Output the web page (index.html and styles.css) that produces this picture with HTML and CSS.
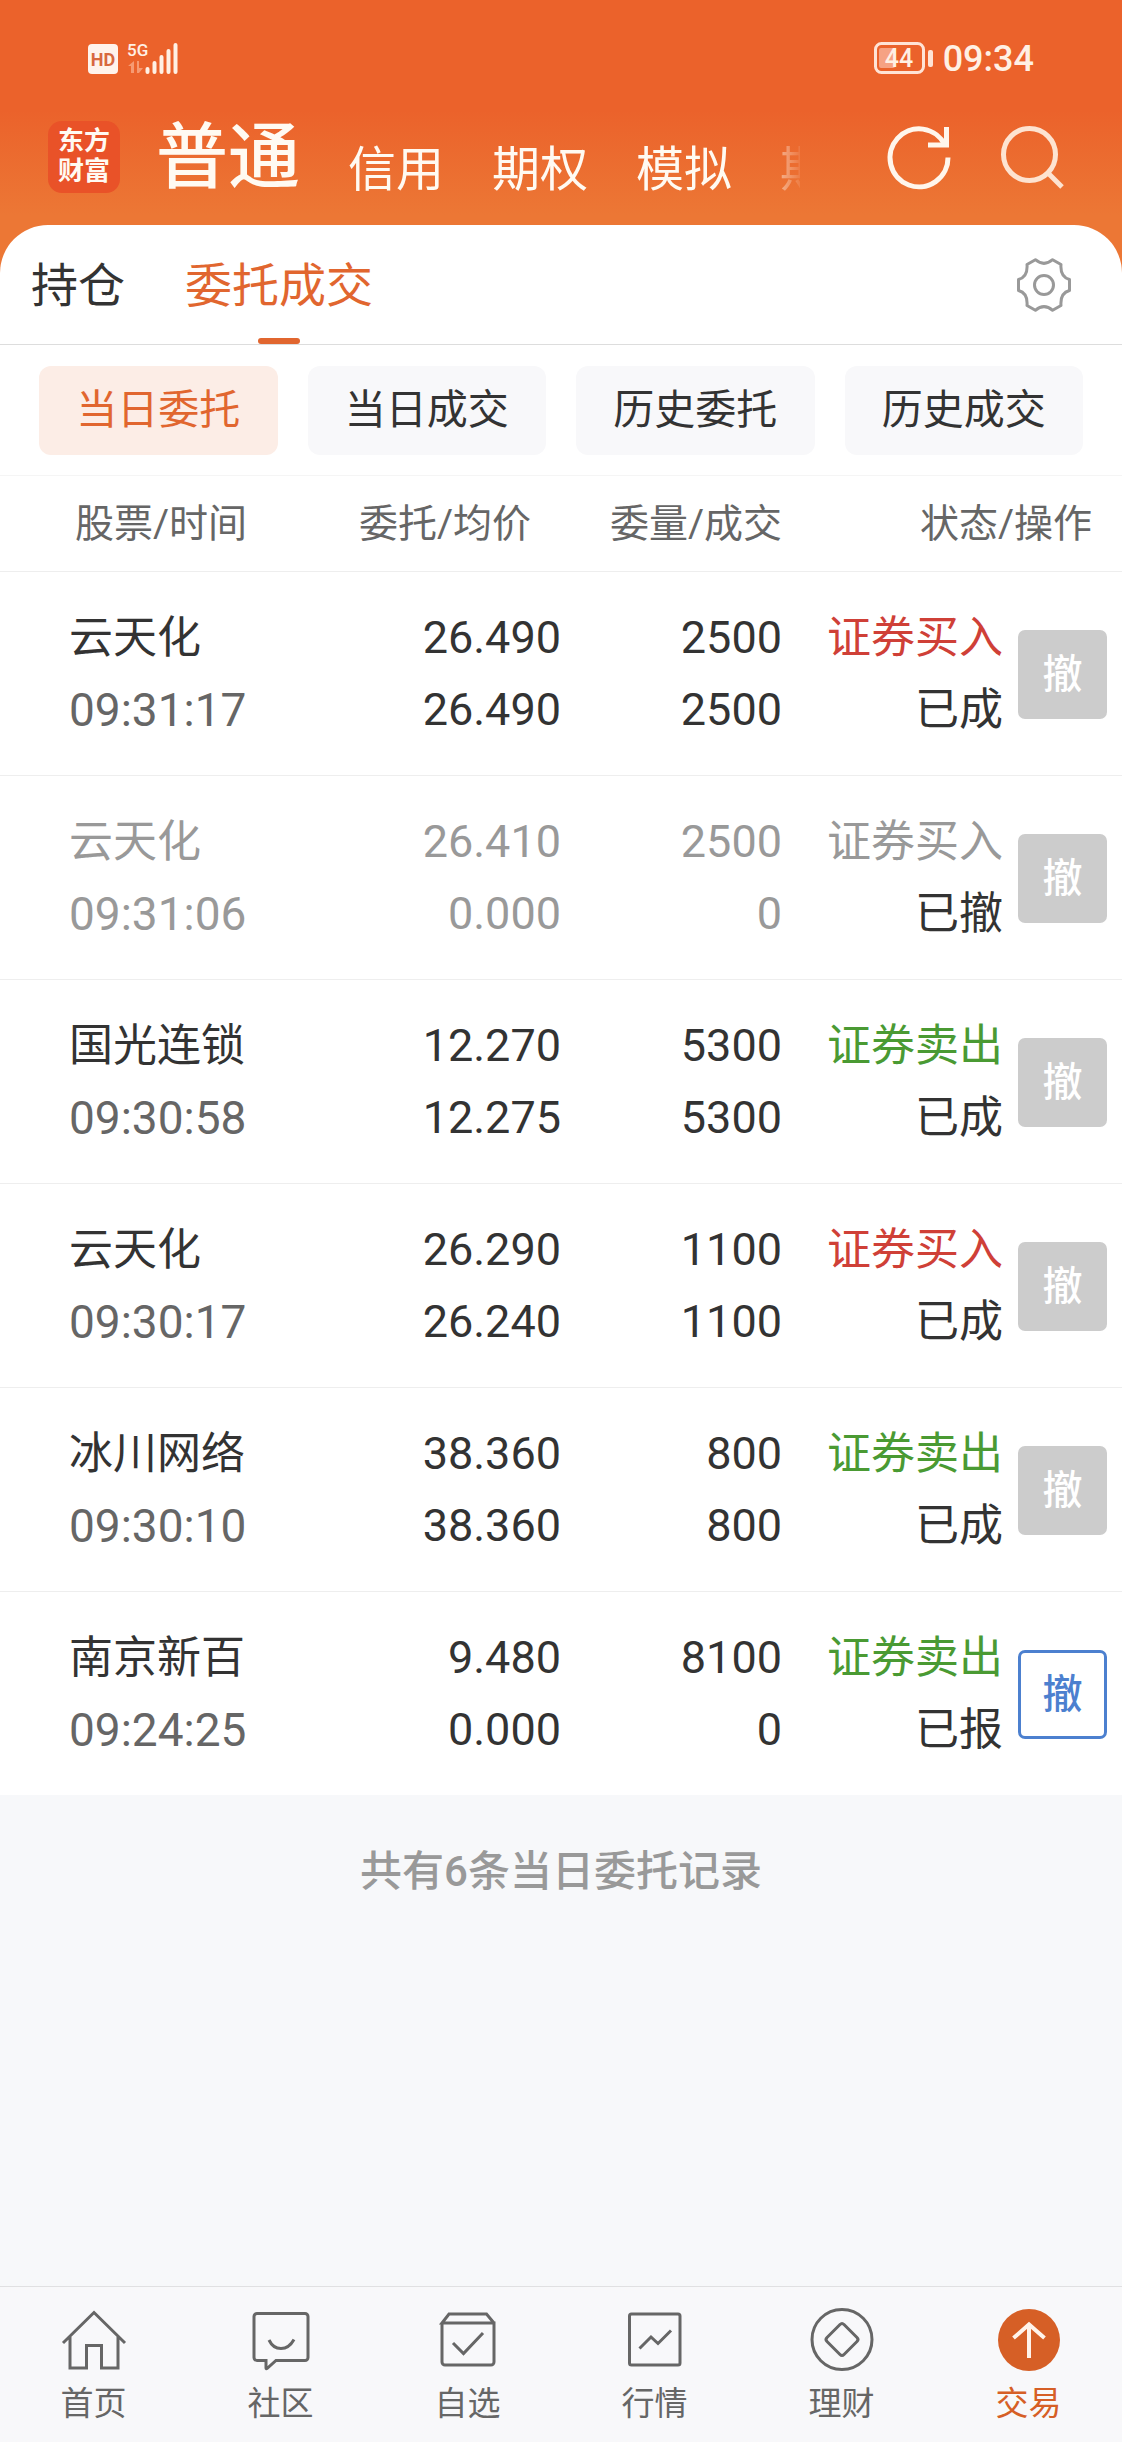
FILE: index.html
```html
<!DOCTYPE html>
<html lang="zh-CN">
<head>
<meta charset="utf-8">
<meta name="viewport" content="width=device-width, initial-scale=1">
<title>委托成交</title>
<link rel="stylesheet" href="styles.css">
</head>
<body>
<div class="app">
  <header class="top">
    <div class="status-bar">
      <svg class="signal" width="92" height="34" viewBox="0 0 92 34" aria-hidden="true">
        <rect x="0" y="3" width="30" height="30" rx="4" fill="#fff3ec"/>
        <text x="15" y="25" text-anchor="middle" font-size="18" font-weight="700" fill="#d8683f">HD</text>
        <text x="39" y="15" font-size="17" font-weight="500" fill="#fff0e4">5G</text>
        <path d="M46 20v12h-3v-7h-3zM49 20h2v7h4l-4 5h-2z" fill="#f69a72"/>
        <path d="M59.500 28v3M66.500 22v9M73.500 16v15M80.500 10v21M87.500 4v27" stroke="#fff0e4" stroke-width="4" stroke-linecap="round"/>
      </svg>
      <div class="status-right">
        <svg width="62" height="34" viewBox="0 0 62 34" aria-hidden="true">
          <rect x="2.500" y="2.500" width="48" height="29" rx="6" fill="none" stroke="#ffe3d5" stroke-width="3"/>
          <rect x="6" y="7" width="16" height="20" rx="2" fill="#f6a283"/>
          <rect x="55" y="9" width="5" height="17" rx="2" fill="#ffe3d5"/>
          <text x="26" y="26" text-anchor="middle" font-size="25" font-weight="500" fill="#fff0e4">44</text>
        </svg>
        <span class="clock">09:34</span>
      </div>
    </div>
    <div class="title-bar">
      <div class="brand"><span>东方</span><span>财富</span></div>
      <nav class="accounts">
        <a class="current" href="#">普通</a>
        <a href="#">信用</a>
        <a href="#">期权</a>
        <a href="#">模拟</a>
        <a href="#">期货</a>
      </nav>
      <div class="tools">
        <button type="button" aria-label="刷新">
          <svg width="72" height="72" viewBox="0 0 72 72" fill="none" stroke="#fff6ec" stroke-width="5">
            <path d="M65 36.500A29 29 0 1 1 62 24"/>
            <path d="M63.500 6v18H45"/>
          </svg>
        </button>
        <button type="button" aria-label="搜索">
          <svg width="72" height="72" viewBox="0 0 72 72" fill="none" stroke="#fde3d1" stroke-width="5">
            <circle cx="35.500" cy="33.500" r="26"/>
            <path d="M54 52l14 14"/>
          </svg>
        </button>
      </div>
    </div>
  </header>

  <main class="sheet">
    <div class="tabs">
      <a href="#">持仓</a>
      <a class="current" href="#">委托成交</a>
      <button class="settings" type="button" aria-label="设置">
        <svg width="54" height="54" viewBox="-27 -27 54 54" fill="none" stroke="#999" stroke-width="3" stroke-linejoin="round">
          <path d="M-8.600 -25.300Q0 -18 8.600 -25.300L17 -20.500Q16 -8 25.500 -5.500V5.500Q16 8 17 20.500L8.600 25.300Q0 18 -8.600 25.300L-17 20.500Q-16 8 -25.500 5.500V-5.500Q-16 -8 -17 -20.500Z"/>
          <circle r="9.500"/>
        </svg>
      </button>
    </div>

    <div class="filters">
      <button class="current" type="button">当日委托</button>
      <button type="button">当日成交</button>
      <button type="button">历史委托</button>
      <button type="button">历史成交</button>
    </div>

    <table class="orders">
      <colgroup>
        <col>
        <col class="col-price">
        <col class="col-qty">
        <col class="col-state">
        <col class="col-action">
      </colgroup>
      <thead>
        <tr>
          <th class="name">股票/时间</th>
          <th class="price">委托/均价</th>
          <th>委量/成交</th>
          <th class="state" colspan="2">状态/操作</th>
        </tr>
      </thead>
      <tbody>
        <tr>
          <td class="name"><span>云天化</span><time>09:31:17</time></td>
          <td><span>26.490</span><span>26.490</span></td>
          <td><span>2500</span><span>2500</span></td>
          <td><span class="buy">证券买入</span><span>已成</span></td>
          <td class="action"><button type="button" disabled>撤</button></td>
        </tr>
        <tr class="cancelled">
          <td class="name"><span>云天化</span><time>09:31:06</time></td>
          <td><span>26.410</span><span>0.000</span></td>
          <td><span>2500</span><span>0</span></td>
          <td><span>证券买入</span><span class="result">已撤</span></td>
          <td class="action"><button type="button" disabled>撤</button></td>
        </tr>
        <tr>
          <td class="name"><span>国光连锁</span><time>09:30:58</time></td>
          <td><span>12.270</span><span>12.275</span></td>
          <td><span>5300</span><span>5300</span></td>
          <td><span class="sell">证券卖出</span><span>已成</span></td>
          <td class="action"><button type="button" disabled>撤</button></td>
        </tr>
        <tr>
          <td class="name"><span>云天化</span><time>09:30:17</time></td>
          <td><span>26.290</span><span>26.240</span></td>
          <td><span>1100</span><span>1100</span></td>
          <td><span class="buy">证券买入</span><span>已成</span></td>
          <td class="action"><button type="button" disabled>撤</button></td>
        </tr>
        <tr>
          <td class="name"><span>冰川网络</span><time>09:30:10</time></td>
          <td><span>38.360</span><span>38.360</span></td>
          <td><span>800</span><span>800</span></td>
          <td><span class="sell">证券卖出</span><span>已成</span></td>
          <td class="action"><button type="button" disabled>撤</button></td>
        </tr>
        <tr>
          <td class="name"><span>南京新百</span><time>09:24:25</time></td>
          <td><span>9.480</span><span>0.000</span></td>
          <td><span>8100</span><span>0</span></td>
          <td><span class="sell">证券卖出</span><span>已报</span></td>
          <td class="action"><button type="button">撤</button></td>
        </tr>
      </tbody>
    </table>
  </main>

  <p class="summary">共有6条当日委托记录</p>

  <nav class="dock">
    <a href="#">
      <svg width="72" height="72" viewBox="0 0 72 72"><path d="M5 41L36 10.500L67 41M12 35V66H28.500V43.500H43.500V66H60V35"/></svg>
      <span>首页</span>
    </a>
    <a href="#">
      <svg width="72" height="72" viewBox="0 0 72 72"><path d="M12 11.500H60a3 3 0 0 1 3 3V55.500a3 3 0 0 1 -3 3H31L22 66.500Q21 67 21 66V58.500H12a3 3 0 0 1 -3 -3V14.500a3 3 0 0 1 3 -3zM24 38Q28 46.500 36 46.500T49 37.500"/></svg>
      <span>社区</span>
    </a>
    <a href="#">
      <svg width="72" height="72" viewBox="0 0 72 72"><path d="M62 21L54.500 12H17L10 21H62V60a3 3 0 0 1 -3 3H13a3 3 0 0 1 -3 -3V21M21 41L31.500 51.500L51 31"/></svg>
      <span>自选</span>
    </a>
    <a href="#">
      <svg width="72" height="72" viewBox="0 0 72 72"><rect x="10.500" y="12" width="50.500" height="51" rx="2"/><path d="M20.500 46.500L32 35L39 41.500L52 28.500"/></svg>
      <span>行情</span>
    </a>
    <a href="#">
      <svg width="72" height="72" viewBox="0 0 72 72"><circle cx="36" cy="37.500" r="30"/><path d="M34 22.500q2 -2 4 0L51 35.500q2 2 0 4L38 52.500q-2 2 -4 0L21 39.500q-2 -2 0 -4z"/></svg>
      <span>理财</span>
    </a>
    <a class="current" href="#">
      <svg width="72" height="72" viewBox="0 0 72 72"><circle class="disc" cx="36" cy="38" r="31"/><path class="arrow" d="M36 23V56M20.500 36L36 22.500L51.500 36"/></svg>
      <span>交易</span>
    </a>
  </nav>
</div>
</body>
</html>
```

FILE: styles.css
```css
:root {
  --accent: #e1662f;
  --ink: #333;
  --muted: #666;
  --faint: #999;
  --canvas: #f7f8fa;
}

* {
  box-sizing: border-box;
}

body {
  margin: 0;
  background: var(--canvas);
  color: var(--ink);
  font-family: Roboto, "Noto Sans CJK SC", sans-serif;
}

a {
  color: inherit;
  text-decoration: none;
}

button {
  margin: 0;
  padding: 0;
  border: 0;
  background: none;
  color: inherit;
  font: inherit;
}

svg {
  display: block;
}

.app {
  display: flex;
  flex-direction: column;
  min-height: 100vh;
}

/* Header */

.top {
  padding: 41px 56px 79px 48px;
  background: linear-gradient(#eb622b 110px, #ec7735 215px);
  color: #fffaf2;
}

.status-bar {
  display: flex;
  justify-content: space-between;
  height: 34px;
  padding: 0 32px 0 40px;
}

.status-right {
  display: flex;
  gap: 8px;
}

.clock {
  color: #fff0e4;
  font-size: 36px;
  font-weight: 500;
  line-height: 36px;
}

.title-bar {
  display: flex;
  align-items: center;
  height: 74px;
  margin-top: 45px;
}

.brand {
  display: flex;
  flex-direction: column;
  justify-content: center;
  width: 72px;
  height: 72px;
  border-radius: 14px;
  background: #e95228;
  font-family: "Liberation Serif", "Noto Sans CJK SC", serif;
  font-size: 26px;
  font-weight: 700;
  line-height: 30px;
  text-align: center;
}

.accounts {
  display: flex;
  flex: 1;
  align-items: flex-end;
  gap: 48px;
  min-width: 0;
  margin: 0 83px 0 36px;
  padding: 26px 0 24px;
  overflow: hidden;
  font-size: 48px;
  line-height: 48px;
  white-space: nowrap;
  -webkit-mask-image: linear-gradient(to right, #000 calc(100% - 50px), rgba(0, 0, 0, 0.1));
  mask-image: linear-gradient(to right, #000 calc(100% - 50px), rgba(0, 0, 0, 0.1));
}

.accounts a {
  flex: none;
}

.accounts .current {
  font-size: 72px;
  font-weight: 500;
  line-height: 72px;
}

.tools {
  display: flex;
  gap: 39px;
}

/* Rounded sheet */

.sheet {
  margin-top: -48px;
  border-radius: 48px 48px 0 0;
  background: #fff;
}

.tabs {
  display: flex;
  align-items: center;
  gap: 60px;
  height: 120px;
  padding: 0 51px 0 31px;
  border-bottom: 1px solid #ddd;
  font-size: 47px;
}

.tabs a {
  position: relative;
  padding-top: 2px;
  line-height: 117px;
}

.tabs .current {
  color: var(--accent);
}

.tabs .current::after {
  position: absolute;
  bottom: 0;
  left: 50%;
  width: 42px;
  height: 6px;
  margin-left: -21px;
  border-radius: 3px;
  background: var(--accent);
  content: "";
}

.settings {
  margin-left: auto;
}

.filters {
  display: grid;
  grid-template-columns: repeat(4, 1fr);
  gap: 30px;
  padding: 21px 39px 20px;
  border-bottom: 1px solid #f5f5f5;
}

.filters button {
  height: 89px;
  border-radius: 12px;
  background: #f8f8fa;
  font-size: 41px;
  line-height: 89px;
}

.filters .current {
  background: #fcede6;
  color: var(--accent);
}

/* Orders */

.orders {
  width: 100%;
  border-collapse: separate;
  border-spacing: 0;
  table-layout: fixed;
}

.col-price {
  width: 260px;
}

.col-qty,
.col-state {
  width: 221px;
}

.col-action {
  width: 119px;
}

.orders th {
  height: 96px;
  padding: 0;
  border-bottom: 1px solid #eee;
  color: var(--muted);
  font-size: 39px;
  font-weight: 400;
  line-height: 48px;
  text-align: right;
}

.orders th.name {
  padding-left: 75px;
}

.orders th.price,
.orders th.state {
  padding-right: 30px;
}

.orders td {
  padding: 30px 0 29px;
  border-bottom: 1px solid #eee;
  font-size: 45px;
  line-height: 72px;
  text-align: right;
}

.orders tbody tr:last-child td {
  border-bottom-color: var(--canvas);
}

.orders td span,
.orders time {
  display: block;
}

.orders .name {
  text-align: left;
}

.orders td.name {
  padding-left: 69px;
}

.orders td.name span,
.orders td:nth-child(4) {
  font-size: 44px;
}

.orders time {
  color: var(--muted);
  font-size: 46px;
}

.buy {
  color: #cf4037;
}

.sell {
  color: #4a9a33;
}

.cancelled,
.cancelled time {
  color: var(--faint);
}

.cancelled .result {
  color: var(--ink);
}

.orders td.action {
  padding-right: 15px;
}

.action button {
  display: block;
  width: 89px;
  height: 89px;
  margin-left: auto;
  border: 3px solid #4c80cf;
  border-radius: 7px;
  color: #4c80cf;
  font-size: 40px;
  font-weight: 500;
  line-height: 83px;
}

.action button:disabled {
  border-color: #ccc;
  background: #ccc;
  color: #fff;
}

.summary {
  margin: 0;
  padding: 46px 0;
  color: var(--faint);
  font-size: 42px;
  font-weight: 500;
  line-height: 60px;
  text-align: center;
}

/* Bottom navigation */

.dock {
  display: grid;
  grid-template-columns: repeat(6, 1fr);
  margin-top: auto;
  padding: 15px 0 18px;
  border-top: 1px solid #e0e0e2;
  background: #f8f8fa;
  color: var(--muted);
  font-size: 33px;
  line-height: 40px;
}

.dock a {
  display: flex;
  flex-direction: column;
  align-items: center;
  gap: 10px;
}

.dock svg {
  fill: none;
  stroke: currentColor;
  stroke-width: 3px;
}

.dock .current {
  color: #d65f26;
}

.dock .disc {
  fill: currentColor;
  stroke: none;
}

.dock .arrow {
  stroke: #fff3ea;
  stroke-width: 4px;
}
```
